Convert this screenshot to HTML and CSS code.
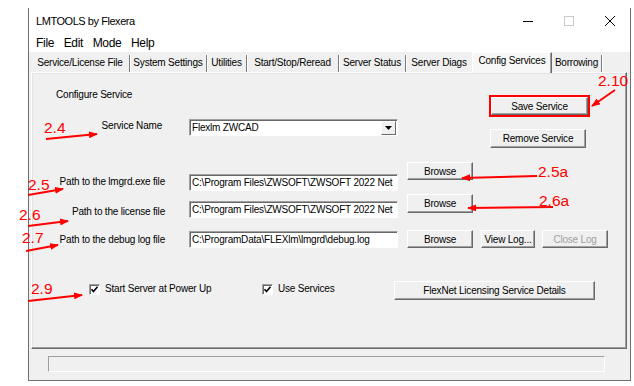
FILE: index.html
```html
<!DOCTYPE html>
<html>
<head>
<meta charset="utf-8">
<title>LMTOOLS by Flexera</title>
<link rel="stylesheet" href="styles.css">
</head>
<body>
<div class="window">
  <div class="titlebar">
    <span class="title">LMTOOLS by Flexera</span>
    <div class="caps">
      <span class="cap"><svg width="10" height="10" viewBox="0 0 10 10"><line x1="0" y1="5.5" x2="10" y2="5.5" stroke="#000" stroke-width="1"/></svg></span>
      <span class="cap"><svg width="10" height="10" viewBox="0 0 10 10"><rect x="0.5" y="0.5" width="9" height="9" fill="none" stroke="#c8c8c8" stroke-width="1"/></svg></span>
      <span class="cap"><svg width="10" height="10" viewBox="0 0 10 10"><path d="M0 0L10 10M10 0L0 10" stroke="#000" stroke-width="1"/></svg></span>
    </div>
  </div>
  <div class="menubar">
    <span class="mi">File</span><span class="mi">Edit</span><span class="mi">Mode</span><span class="mi">Help</span>
  </div>
  <div class="client">
    <div class="tabs">
      <div class="tab t1">Service/License File</div>
      <div class="tab t2">System Settings</div>
      <div class="tab t3">Utilities</div>
      <div class="tab t4">Start/Stop/Reread</div>
      <div class="tab t5">Server Status</div>
      <div class="tab t6">Server Diags</div>
      <div class="tab sel">Config Services</div>
      <div class="tab t8">Borrowing</div>
    </div>
    <div class="panel">
      <div class="row r1">
        <span class="txt cfg">Configure Service</span>
        <div class="savebox"><div class="btn save">Save Service</div></div>
      </div>
      <div class="row r2">
        <span class="txt lbl">Service Name</span>
        <div class="field combo"><span class="val">Flexlm ZWCAD</span><span class="ddbtn"><svg width="7" height="4" viewBox="0 0 7 4"><path d="M0 0H7L3.5 4Z" fill="#000"/></svg></span></div>
        <div class="btn remove">Remove Service</div>
      </div>
      <div class="row r3">
        <span class="txt lbl">Path to the lmgrd.exe file</span>
        <div class="field"><span class="val">C:\Program Files\ZWSOFT\ZWSOFT 2022 Net</span></div>
        <div class="btn browse">Browse</div>
      </div>
      <div class="row r4">
        <span class="txt lbl">Path to the license file</span>
        <div class="field"><span class="val">C:\Program Files\ZWSOFT\ZWSOFT 2022 Net</span></div>
        <div class="btn browse">Browse</div>
      </div>
      <div class="row r5">
        <span class="txt lbl">Path to the debug log file</span>
        <div class="field"><span class="val">C:\ProgramData\FLEXlm\lmgrd\debug.log</span></div>
        <div class="btn browse">Browse</div>
        <div class="btn viewlog">View Log...</div>
        <div class="btn closelog disabled">Close Log</div>
      </div>
      <div class="row r6">
        <label class="chk c1"><span class="box"><svg width="9" height="9" viewBox="0 0 9 9"><path d="M1.5 4.2L3.5 6.5L7.5 1.8" fill="none" stroke="#000" stroke-width="1.6"/></svg></span><span class="txt">Start Server at Power Up</span></label>
        <label class="chk c2"><span class="box"><svg width="9" height="9" viewBox="0 0 9 9"><path d="M1.5 4.2L3.5 6.5L7.5 1.8" fill="none" stroke="#000" stroke-width="1.6"/></svg></span><span class="txt">Use Services</span></label>
        <div class="btn flexnet">FlexNet Licensing Service Details</div>
      </div>
    </div>
    <div class="status"><div class="statusbox"></div></div>
  </div>
</div>

<svg class="annot" width="634" height="386" viewBox="0 0 634 386">
  <defs>
    <marker id="ah" markerWidth="9" markerHeight="7" refX="8" refY="3.5" orient="auto" markerUnits="userSpaceOnUse">
      <path d="M0 0L9 3.5L0 7Z" fill="#f00"/>
    </marker>
  </defs>
  <g class="anum">
    <text x="598" y="86">2.10</text>
    <text x="44" y="133">2.4</text>
    <text x="28" y="190">2.5</text>
    <text x="538" y="177">2.5a</text>
    <text x="19" y="220">2.6</text>
    <text x="539" y="206">2.6a</text>
    <text x="22" y="243">2.7</text>
    <text x="31" y="294">2.9</text>
  </g>
  <g stroke="#f00" stroke-width="2" fill="none" marker-end="url(#ah)">
    <line x1="615" y1="90" x2="592" y2="106"/>
    <line x1="46" y1="139" x2="97" y2="134"/>
    <line x1="28" y1="195" x2="63" y2="189"/>
    <line x1="537" y1="176" x2="462" y2="178"/>
    <line x1="28" y1="226" x2="68" y2="221"/>
    <line x1="553" y1="207" x2="468" y2="208"/>
    <line x1="26" y1="251" x2="58" y2="245"/>
    <line x1="28" y1="301" x2="82" y2="295"/>
  </g>
</svg>
</body>
</html>
```

FILE: styles.css
```css
* { box-sizing: border-box; }
html, body { margin: 0; padding: 0; }
body {
  background: #fff;
  width: 634px;
  height: 386px;
  position: relative;
  overflow: hidden;
  font-family: "Liberation Sans", Arial, sans-serif;
  color: #000;
}

.window {
  margin: 8px 0 0 28px;
  width: 603px;
  height: 373px;
  border: 1px solid #6f6f6f;
  border-top: none;
  display: flex;
  flex-direction: column;
  background: #fff;
}

.titlebar {
  height: 25px;
  display: flex;
  align-items: center;
}
.title {
  margin-left: 7px;
  font-size: 11px;
  letter-spacing: -0.45px;
}
.caps { margin-left: auto; display: flex; height: 25px; }
.cap {
  width: 41px;
  height: 25px;
  display: flex;
  align-items: center;
  justify-content: center;
}
.cap svg { display: block; }

.menubar {
  height: 19px;
  display: flex;
  align-items: center;
  padding-left: 7px;
  font-size: 12px;
  letter-spacing: -0.3px;
}
.mi { margin-right: 9.5px; }

.client {
  flex: 1;
  background: #f0f0f0;
  padding: 0 3px 0 2px;
  display: flex;
  flex-direction: column;
}

.tabs {
  height: 20px;
  display: flex;
  align-items: flex-end;
  font-size: 10px;
  letter-spacing: -0.2px;
}
.tab {
  height: 17px;
  line-height: 16px;
  text-align: center;
  border-right: 1px solid #7c7c7c;
  box-shadow: 1px 0 0 #fff;
  white-space: nowrap;
}
.t1 { width: 99px; }
.t2 { width: 77px; }
.t3 { width: 40px; }
.t4 { width: 92px; }
.t5 { width: 67px; }
.t6 { width: 66px; border-right: none; box-shadow: none; }
.tab.sel {
  width: 80px;
  height: 21px;
  line-height: 16px;
  margin-bottom: -1px;
  background: #f7f7f7;
  border-top: 1px solid #fff;
  border-left: 1px solid #fff;
  border-right: 1px solid #6a6a6a;
  box-shadow: inset -1px 0 #a0a0a0;
  position: relative;
  z-index: 1;
}
.t8 { width: 50px; }

.panel {
  height: 277px;
  border: 1px solid;
  border-color: #fff #6a6a6a #6a6a6a #fff;
  box-shadow: inset -1px -1px #a0a0a0, inset 1px 1px #e3e3e3;
  font-size: 10px;
  letter-spacing: -0.2px;
}

.row { display: flex; align-items: flex-start; }
.txt { line-height: 14px; white-space: nowrap; }
.lbl { width: 133px; text-align: right; flex: none; }

.r1 { height: 44px; }
.cfg { margin-left: 24px; margin-top: 15px; }
.savebox {
  margin-left: auto;
  margin-right: 36px;
  margin-top: 22px;
  border: 2px solid #f00;
  padding: 0;
}
.btn {
  height: 18px;
  flex: none;
  display: flex;
  align-items: center;
  justify-content: center;
  background: #f0f0f0;
  border: 1px solid;
  border-color: #fff #696969 #696969 #fff;
  box-shadow: inset -1px -1px #a0a0a0;
  white-space: nowrap;
}
.btn.save { width: 97px; height: 18px; }

.r2 { height: 33px; }
.r2 .lbl { margin-top: 2px; padding-right: 3px; }
.field {
  margin-left: 24px;
  width: 209px;
  height: 17px;
  flex: none;
  background: #fff;
  border: 1px solid;
  border-color: #a0a0a0 #fff #fff #a0a0a0;
  box-shadow: inset 1px 1px #696969;
  display: flex;
  align-items: center;
  overflow: hidden;
}
.val {
  padding-left: 2px;
  white-space: nowrap;
  flex: 1;
  line-height: 14px;
}
.combo { margin-top: 2px; }
.ddbtn {
  flex: none;
  width: 15px;
  height: 14px;
  margin-right: 1px;
  background: #f0f0f0;
  border: 1px solid;
  border-color: #fff #696969 #696969 #fff;
  display: flex;
  align-items: center;
  justify-content: center;
}
.ddbtn svg { display: block; }
.remove { margin-left: 92px; margin-top: 12px; width: 96px; height: 19px; }

.r3 { height: 40px; }
.r3 .lbl { margin-top: 25px; }
.r3 .field { margin-top: 24px; }
.browse { margin-left: 9px; width: 66px; }
.r3 .browse { margin-top: 12px; }

.r4 { height: 27px; }
.r4 .lbl { margin-top: 15px; }
.r4 .field { margin-top: 11px; }
.r4 .browse { margin-top: 4px; height: 19px; }

.r5 { height: 31px; }
.r5 .lbl { margin-top: 16px; }
.r5 .field { margin-top: 14px; }
.r5 .btn { margin-top: 13px; }
.viewlog { margin-left: 8px; width: 54px; }
.closelog { margin-left: 7px; width: 66px; }
.disabled { color: #a0a0a0; }

.r6 { height: 60px; }
.chk { display: flex; align-items: center; flex: none; margin-top: 34px; }
.c1 { margin-left: 57px; width: 173px; }
.c2 { width: 132px; }
.box {
  width: 11px;
  height: 11px;
  background: #fff;
  border: 1px solid;
  border-color: #a0a0a0 #fff #fff #a0a0a0;
  box-shadow: inset 1px 1px #696969;
  display: flex;
  align-items: center;
  justify-content: center;
  flex: none;
  margin-right: 5px;
}
.box svg { display: block; }
.flexnet { margin-top: 33px; width: 201px; height: 19px; }

.status { flex: 1; }
.statusbox {
  margin: 7px 0 0 17px;
  width: 557px;
  height: 16px;
  border: 1px solid;
  border-color: #a0a0a0 #fff #fff #a0a0a0;
  background: #f0f0f0;
}

.annot {
  position: absolute;
  left: 0;
  top: 0;
  pointer-events: none;
}
.anum text {
  font-family: "Liberation Sans", Arial, sans-serif;
  font-size: 15.5px;
  fill: #f00;
}
```
